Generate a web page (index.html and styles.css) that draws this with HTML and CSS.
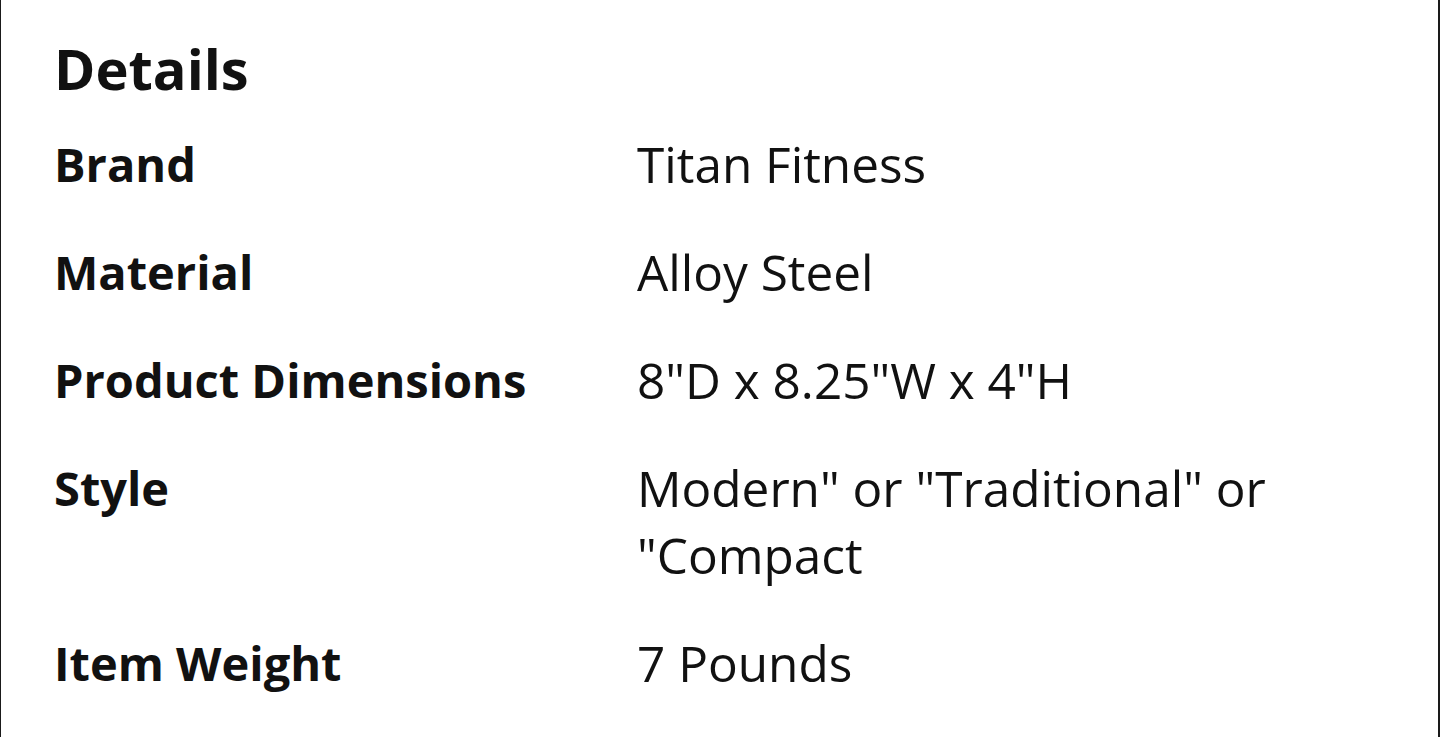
FILE: index.html
```html
<!DOCTYPE html>
<html lang="en">
<head>
<meta charset="utf-8">
<title>Details</title>
<link rel="stylesheet" href="styles.css">
</head>
<body>
<section class="panel">
  <h2 class="title">Details</h2>
  <dl class="specs">
    <dt>Brand</dt><dd>Titan Fitness</dd>
    <dt>Material</dt><dd>Alloy Steel</dd>
    <dt>Product Dimensions</dt><dd>8"D x 8.25"W x 4"H</dd>
    <dt>Style</dt><dd>Modern" or "Traditional" or "Compact</dd>
    <dt>Item Weight</dt><dd>7 Pounds</dd>
  </dl>
</section>
</body>
</html>
```
FILE: styles.css
```css
html, body {
  margin: 0;
  padding: 0;
  background: #ffffff;
}
.panel {
  box-sizing: border-box;
  height: 737px;
  border-left: 1px solid #1a1a1a;
  border-right: 2px solid #1a1a1a;
  padding: 28px 0 0 53px;
  font-family: "Open Sans", "Noto Sans", sans-serif;
  color: #111111;
  overflow: hidden;
}
.title {
  margin: 0;
  font-size: 56px;
  font-weight: 700;
  line-height: 80px;
}
.specs {
  margin: 23px 0 0;
  display: grid;
  grid-template-columns: 583px 640px;
  row-gap: 41px;
  line-height: 67px;
}
.specs dt {
  font-size: 47px;
  font-weight: 700;
}
.specs dd {
  margin: 0;
  font-size: 49.5px;
  font-weight: 400;
}
```
